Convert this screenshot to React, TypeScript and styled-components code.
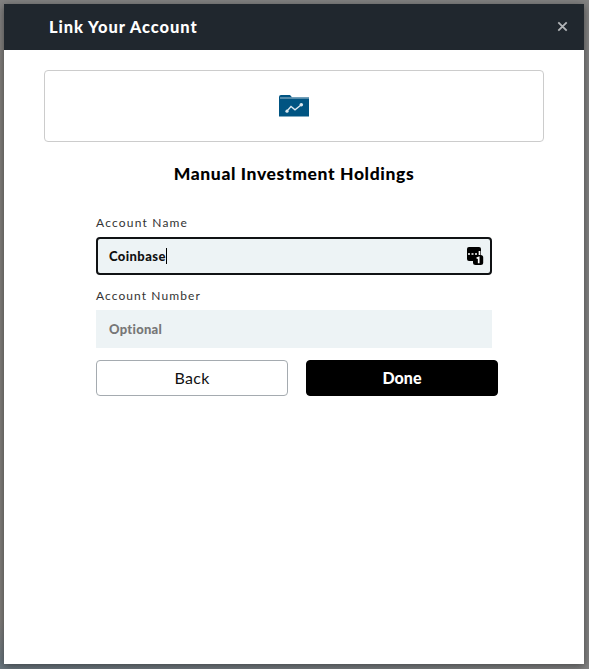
import React from "react";
import styled, { createGlobalStyle } from "styled-components";

const GlobalStyle = createGlobalStyle`
  * { box-sizing: border-box; }
  html, body { margin: 0; padding: 0; overflow: hidden; }
  body { background: #7e7e7e; font-family: Lato, "Open Sans", sans-serif; color: #000; }
`;

const Backdrop = styled.div`
  width: 589px;
  height: 669px;
  padding: 4px 5px 5px 4px;
  background: linear-gradient(90deg, transparent 4px, #828282 584px),
    linear-gradient(#828282 0, #827f7c 70px, #827f7c 620px, #6b777f 664px);
`;

const Modal = styled.section`
  display: flex;
  flex-direction: column;
  width: 580px;
  height: 660px;
  background: #fff;
  box-shadow: 0 2px 8px rgba(0, 0, 0, 0.45);
`;

const Header = styled.header`
  display: flex;
  align-items: center;
  justify-content: space-between;
  height: 46px;
  padding: 0 16px 0 45px;
  background: #20272e;
`;

const Title = styled.h1`
  margin: 0;
  font-size: 16.5px;
  line-height: 24px;
  font-weight: 900;
  letter-spacing: 0.92px;
  color: #fff;
  white-space: nowrap;
`;

const CloseButton = styled.button`
  display: flex;
  margin-top: -1px;
  padding: 0;
  border: 0;
  background: none;
`;

const Body = styled.main`
  display: flex;
  flex-direction: column;
  padding: 20px 40px;
`;

const Card = styled.div`
  display: flex;
  align-items: center;
  justify-content: center;
  height: 72px;
  border: 1px solid #ccc;
  border-radius: 4px;
`;

const Heading = styled.h2`
  margin: 20px 0 0;
  font-size: 17.5px;
  line-height: 24px;
  font-weight: 900;
  letter-spacing: 0.62px;
  text-align: center;
  white-space: nowrap;
`;

const Form = styled.div`
  width: 402px;
  margin: 27px 0 0 52px;
`;

const Label = styled.div<{ $spacing: number }>`
  height: 24px;
  font-size: 12px;
  line-height: 20px;
  letter-spacing: ${(p) => p.$spacing}px;
  color: #333;
  white-space: nowrap;
`;

const Field = styled.div<{ $focused?: boolean }>`
  display: flex;
  align-items: center;
  justify-content: space-between;
  width: 396px;
  height: 38px;
  margin-bottom: 11px;
  padding: 0 6px 0 11px;
  border: 2px solid ${(p) => (p.$focused ? "#101214" : "#edf3f5")};
  border-radius: ${(p) => (p.$focused ? 4 : 0)}px;
  background: #edf3f5;
`;

const Value = styled.span<{ $placeholder?: boolean }>`
  display: flex;
  align-items: center;
  font-size: 13px;
  line-height: 18px;
  font-weight: 900;
  letter-spacing: ${(p) => (p.$placeholder ? 0.28 : 0.42)}px;
  color: ${(p) => (p.$placeholder ? "#777" : "#111")};
`;

const Caret = styled.i`
  width: 1px;
  height: 16px;
  background: #000;
`;

const Actions = styled.div`
  display: flex;
  gap: 18px;
  margin-top: 12px;
`;

const Button = styled.button<{ $primary?: boolean }>`
  width: 192px;
  height: 36px;
  padding: 0 0 1px;
  border: 1px solid ${(p) => (p.$primary ? "#000" : "#a5abb0")};
  border-radius: 4px;
  background: ${(p) => (p.$primary ? "#000" : "#fff")};
  color: ${(p) => (p.$primary ? "#fff" : "#111")};
  font-family: inherit;
  font-size: 16px;
  letter-spacing: ${(p) => (p.$primary ? 0 : 0.3)}px;
  font-weight: ${(p) => (p.$primary ? 900 : 400)};
`;

const CloseIcon = () => (
  <svg width="11" height="11" viewBox="0 0 11 11">
    <path d="M1.3 1.3 9.7 9.7M9.7 1.3 1.3 9.7" stroke="#b2b5b8" strokeWidth="1.8" />
  </svg>
);

const FolderIcon = () => (
  <svg width="32" height="24" viewBox="0 0 32 24">
    <path d="M1 22.5V3Q1 1 3 1H12L14 3.3H31V22.5Z" fill="#005482" />
    <path d="M2 4H31" stroke="#a9c3d3" strokeWidth="1" />
    <path d="M9 17 13 12.5 17 15.8 23 11" fill="none" stroke="#dce8ef" strokeWidth="1.3" />
    <circle cx="9" cy="17.2" r="1.6" fill="#dce8ef" />
    <circle cx="23.3" cy="10.8" r="1.8" fill="#dce8ef" />
  </svg>
);

const PasswordIcon = () => (
  <svg width="17" height="19" viewBox="0 0 17 19">
    <rect x="0" y="0" width="14" height="14" rx="2" fill="#000" />
    <path d="M1 7h2M4.5 7h2M8 7h2M12.5 4v4" stroke="#fff" strokeWidth="1.7" />
    <rect x="6" y="8" width="10.2" height="10" rx="2.5" fill="#000" />
    <path d="M9.6 11.2 11.7 10.4V16.2" fill="none" stroke="#fff" strokeWidth="1.7" />
  </svg>
);

export default function App() {
  return (
    <>
      <GlobalStyle />
      <Backdrop>
        <Modal>
          <Header>
            <Title>Link Your Account</Title>
            <CloseButton aria-label="Close"><CloseIcon /></CloseButton>
          </Header>
          <Body>
            <Card><FolderIcon /></Card>
            <Heading>Manual Investment Holdings</Heading>
            <Form>
              <Label $spacing={1.19}>Account Name</Label>
              <Field $focused>
                <Value>Coinbase<Caret /></Value>
                <PasswordIcon />
              </Field>
              <Label $spacing={1.08}>Account Number</Label>
              <Field>
                <Value $placeholder>Optional</Value>
              </Field>
              <Actions>
                <Button>Back</Button>
                <Button $primary>Done</Button>
              </Actions>
            </Form>
          </Body>
        </Modal>
      </Backdrop>
    </>
  );
}
